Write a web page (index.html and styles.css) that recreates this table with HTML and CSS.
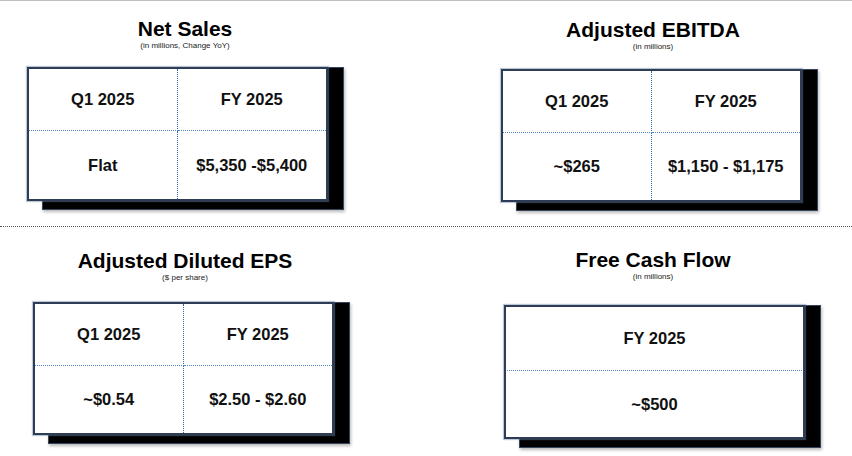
FILE: index.html
```html
<!DOCTYPE html>
<html lang="en">
<head>
<meta charset="utf-8">
<title>Guidance</title>
<link rel="stylesheet" href="styles.css">
</head>
<body>
<div class="page">
  <div class="topline"></div>
  <div class="row row-top">
    <section class="panel panel-tl">
      <header class="head">
        <h2 class="title">Net Sales</h2>
        <p class="sub">(in millions, Change YoY)</p>
      </header>
      <div class="card">
        <div class="tbl">
          <div class="cell c-r c-b">Q1 2025</div>
          <div class="cell c-b">FY 2025</div>
          <div class="cell c-r">Flat</div>
          <div class="cell">$5,350 -$5,400</div>
        </div>
      </div>
    </section>
    <section class="panel panel-tr">
      <header class="head">
        <h2 class="title">Adjusted EBITDA</h2>
        <p class="sub">(in millions)</p>
      </header>
      <div class="card">
        <div class="tbl">
          <div class="cell c-r c-b">Q1 2025</div>
          <div class="cell c-b">FY 2025</div>
          <div class="cell c-r">~$265</div>
          <div class="cell">$1,150 - $1,175</div>
        </div>
      </div>
    </section>
  </div>
  <div class="sep"></div>
  <div class="row">
    <section class="panel panel-bl">
      <header class="head">
        <h2 class="title">Adjusted Diluted EPS</h2>
        <p class="sub">($ per share)</p>
      </header>
      <div class="card">
        <div class="tbl">
          <div class="cell c-r c-b">Q1 2025</div>
          <div class="cell c-b">FY 2025</div>
          <div class="cell c-r">~$0.54</div>
          <div class="cell">$2.50 - $2.60</div>
        </div>
      </div>
    </section>
    <section class="panel panel-br">
      <header class="head">
        <h2 class="title">Free Cash Flow</h2>
        <p class="sub">(in millions)</p>
      </header>
      <div class="card">
        <div class="tbl tbl-single">
          <div class="cell c-b c-inset">FY 2025</div>
          <div class="cell">~$500</div>
        </div>
      </div>
    </section>
  </div>
</div>
</body>
</html>
```

FILE: styles.css
```css
* { box-sizing: border-box; }

html, body {
  margin: 0;
  padding: 0;
  background: #ffffff;
}

body {
  font-family: "Liberation Sans", Arial, sans-serif;
  color: #000;
}

.page {
  width: 852px;
  height: 456px;
  display: flex;
  flex-direction: column;
  overflow: hidden;
}

.topline {
  height: 1px;
  flex: none;
  background: #bdbdbd;
}

.row {
  display: grid;
  grid-template-columns: 426px 426px;
  flex: none;
}

.row-top { height: 225px; }

.sep {
  height: 1px;
  flex: none;
  border-top: 1px dotted #555;
}

.panel {
  display: flex;
  flex-direction: column;
  align-items: flex-start;
}

.head {
  width: 320px;
  text-align: center;
}

.title {
  margin: 0;
  font-size: 21px;
  line-height: 24px;
  font-weight: 700;
  color: #000;
}

.sub {
  margin: 0;
  font-size: 8px;
  line-height: 10px;
  color: #222;
}

.card {
  position: relative;
  width: 301px;
  height: 134px;
}

.card::before {
  content: "";
  position: absolute;
  left: 15px;
  top: 0;
  right: -16px;
  bottom: -9px;
  background: #000;
  border: 1px solid #34455f;
  box-shadow: 1px 2px 3px rgba(0, 0, 0, 0.28);
}

.tbl {
  position: relative;
  width: 100%;
  height: 100%;
  background: #fff;
  border: 2px solid #2d3d58;
  box-shadow: 0 0 1px 1px rgba(110, 130, 160, 0.45);
  display: grid;
  grid-template-columns: 1fr 1fr;
  grid-template-rows: 62px 1fr;
}

.tbl-single {
  grid-template-columns: 1fr;
  grid-template-rows: 64px 1fr;
}

.cell {
  display: flex;
  align-items: center;
  justify-content: center;
  font-size: 16.5px;
  font-weight: 700;
  color: #111;
  white-space: nowrap;
}

.c-r { border-right: 1px dotted #2a66ad; }
.c-b { border-bottom: 1px dotted #4d86c8; }
.c-inset { margin: 0 1px; }

/* panel placement */
.panel-tl { padding-top: 16px; }
.panel-tl .head { margin-left: 25px; }
.panel-tl .card { margin-left: 27px; margin-top: 16px; }

.panel-tr { padding-top: 17px; }
.panel-tr .head { margin-left: 67px; }
.panel-tr .card { margin-left: 75px; margin-top: 17px; height: 133px; }

.panel-bl { padding-top: 22px; }
.panel-bl .head { margin-left: 25px; }
.panel-bl .card { margin-left: 33px; margin-top: 19px; height: 133px; }

.panel-br { padding-top: 21px; }
.panel-br .head { margin-left: 67px; }
.panel-br .card { margin-left: 78px; margin-top: 23px; }
```
